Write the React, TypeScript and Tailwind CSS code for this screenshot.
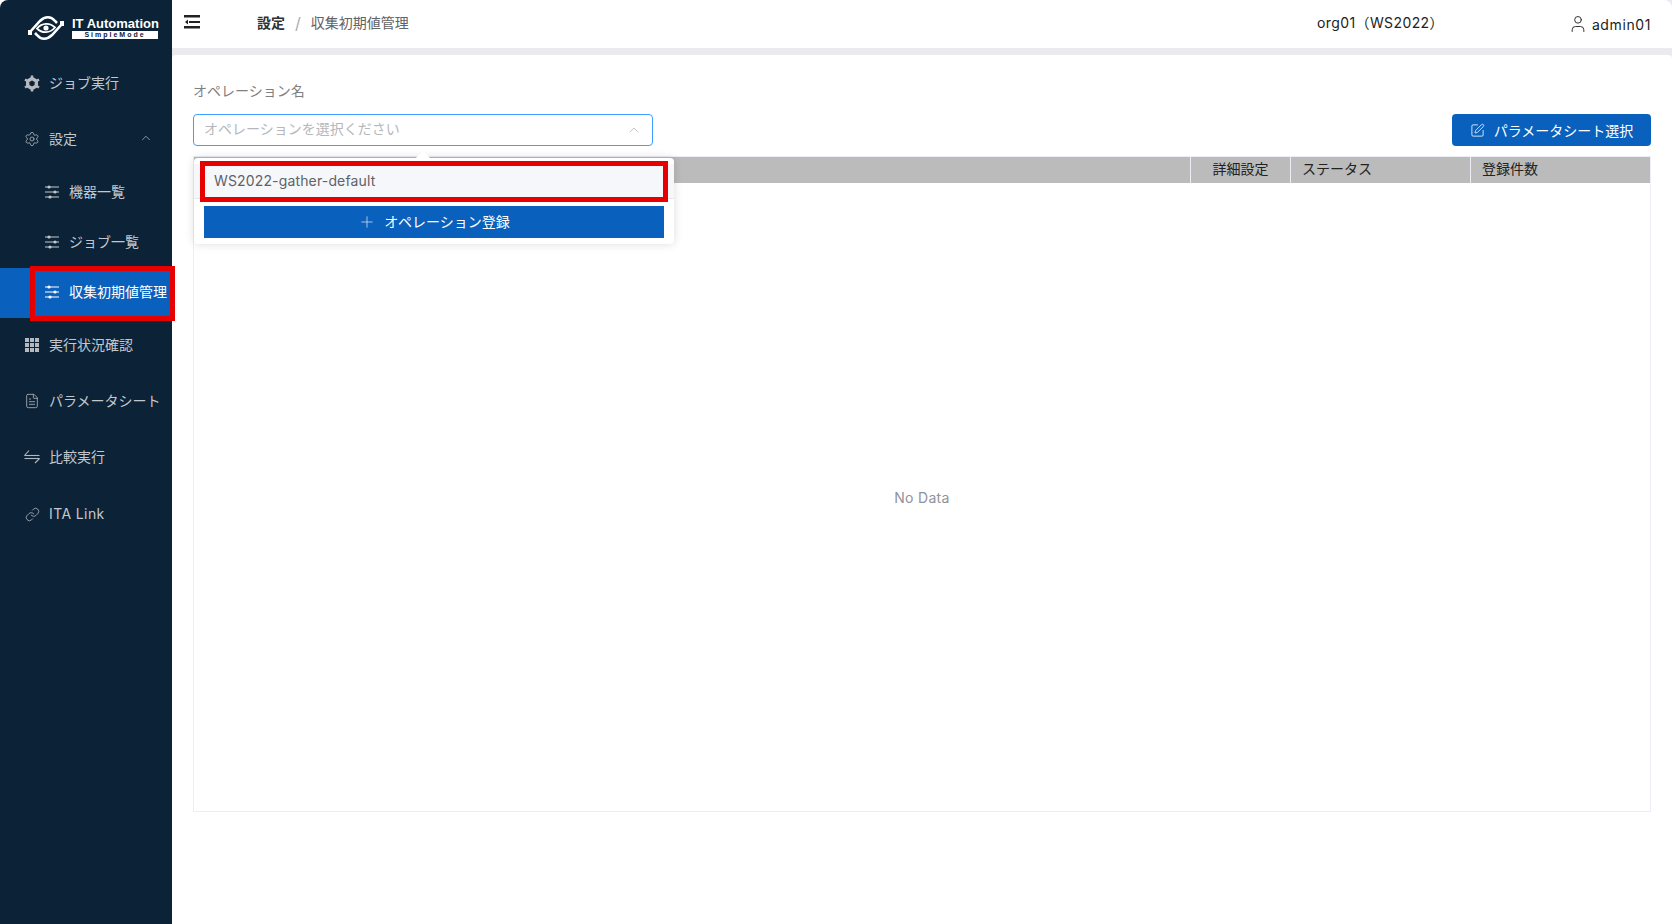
import { ChevronUp, FileText, Link, Plus, Settings, SquarePen, User } from "lucide-react";

const Sliders = () => (
  <svg width="14" height="14" viewBox="0 0 14 14" fill="currentColor" className="mt-[2px]">
    <rect x="0" y="1.5" width="14" height="1" />
    <rect x="0" y="6.500" width="14" height="1" />
    <rect x="0" y="11.500" width="14" height="1" />
    <circle cx="4" cy="2" r="1.600" />
    <circle cx="10" cy="7" r="1.600" />
    <circle cx="5" cy="12" r="1.600" />
  </svg>
);

const GearFilled = () => (
  <svg width="17" height="17" viewBox="0 0 16 16" fill="none" stroke="currentColor" className="mt-[2px]">
    <path d="M8 3 12.300 5.500v5L8 13l-4.300-2.500v-5z" strokeWidth="3.400" strokeLinejoin="round" />
    <path d="M8 0v2M8 14v2M1 4l1.700 1M13.300 11 15 12M1 12l1.700-1M13.300 5 15 4" strokeWidth="2.600" />
  </svg>
);

const GridIcon = () => (
  <svg width="14" height="14" viewBox="0 0 14 14" fill="currentColor" className="mt-[2px]">
    <rect x="0" y="0" width="4" height="4" />
    <rect x="5" y="0" width="4" height="4" />
    <rect x="10" y="0" width="4" height="4" />
    <rect x="0" y="5" width="4" height="4" />
    <rect x="5" y="5" width="4" height="4" />
    <rect x="10" y="5" width="4" height="4" />
    <rect x="0" y="10" width="4" height="4" />
    <rect x="5" y="10" width="4" height="4" />
    <rect x="10" y="10" width="4" height="4" />
  </svg>
);

const SwapIcon = () => (
  <svg width="16" height="16" viewBox="0 0 16 16" fill="none" stroke="currentColor" strokeWidth="1.100">
    <path d="M0.500 7.500 5 2.500" />
    <path d="M0.500 7.500H15.500" />
    <path d="M0.500 10.500H15.500" />
    <path d="M15.500 10.500 11 15" />
  </svg>
);

const Logo = () => (
  <div className="flex items-center gap-[7px]">
    <svg width="38" height="26" viewBox="0 0 38 26" fill="none" stroke="#fff">
      <path d="M3 17 13 6c5-5 11-5 15 0l2 2" strokeWidth="2.600" />
      <path d="M35 9 25 20c-5 5-11 5-15 0l-2-2" strokeWidth="2.600" />
      <path d="M10 13.500c5-6 13-6 18-1-5 6-13 6-18 1z" strokeWidth="1.800" />
      <circle cx="19" cy="13" r="2.600" fill="#fff" stroke="none" />
      <rect x="1" y="15" width="4" height="5" fill="#fff" stroke="none" />
      <rect x="33" y="6" width="4" height="5" fill="#fff" stroke="none" />
    </svg>
    <div className="flex w-[86px] flex-col">
      <span className="font-['Liberation_Sans',sans-serif] text-[13px] leading-[14px] font-bold whitespace-nowrap text-white">
        IT Automation
      </span>
      <span className="h-[8px] bg-white text-center font-['Liberation_Sans',sans-serif] text-[7px] leading-[8px] font-bold tracking-[2px] text-[#0c2237]">
        SimpleMode
      </span>
    </div>
  </div>
);

const TopItem = ({ icon, label, className = "" }: { icon: React.ReactNode; label: string; className?: string }) => (
  <div className={`flex items-center gap-[9px] pl-[24px] text-[14px] text-[#c3c8cf] ${className}`}>
    <span className="flex w-[16px] justify-center text-[#b4b9c0]">{icon}</span>
    <span className="whitespace-nowrap">{label}</span>
  </div>
);

const SubItem = ({ label, active = false }: { label: string; active?: boolean }) => (
  <div
    className={`relative flex h-[50px] items-center gap-[10px] pb-[4px] pl-[45px] text-[14px] ${
      active ? "bg-[#0a60bd] text-white" : "text-[#c3c8cf]"
    }`}
  >
    <Sliders />
    <span className="whitespace-nowrap">{label}</span>
    {active && (
      <div className="absolute top-[-2px] left-[30px] z-10 h-[55px] w-[145px] border-[5px] border-[#e60000]" />
    )}
  </div>
);

export default function App() {
  return (
    <div className="flex h-[924px] w-[1672px] overflow-hidden bg-white font-['Inter','Noto_Sans_CJK_JP',sans-serif]">
      {/* sidebar */}
      <aside className="flex w-[172px] shrink-0 flex-col rounded-tl-lg bg-[#0c2237]">
        <div className="flex h-[48px] items-center pt-[7px] pl-[27px]">
          <Logo />
        </div>
        <TopItem icon={<GearFilled />} label="ジョブ実行" className="mt-[8px] h-[52px]" />
        <div className="relative mt-[2px]">
          <TopItem icon={<Settings size={20} strokeWidth={1.200} className="mt-[2px]" />} label="設定" className="h-[56px]" />
          <ChevronUp size={14} strokeWidth={1.200} className="absolute top-[21px] right-[19px] text-[#c3c8cf]" />
        </div>
        <div className="mt-[2px]">
          <SubItem label="機器一覧" />
          <SubItem label="ジョブ一覧" />
          <SubItem label="収集初期値管理" active />
        </div>
        <TopItem icon={<GridIcon />} label="実行状況確認" className="mt-[-2px] h-[56px]" />
        <TopItem icon={<FileText size={20} strokeWidth={1.200} className="mt-[2px]" />} label="パラメータシート" className="h-[56px]" />
        <TopItem icon={<SwapIcon />} label="比較実行" className="h-[56px]" />
        <TopItem icon={<Link size={15} strokeWidth={1.300} className="mt-[2px]" />} label="ITA Link" className="mt-[1px] h-[56px] tracking-[0.4px]" />
      </aside>

      <div className="flex min-w-0 flex-1 flex-col bg-[#ebebef]">
        {/* header */}
        <header className="flex h-[48px] shrink-0 items-center rounded-tr-lg bg-white text-[14px]">
          <svg width="16" height="14" viewBox="0 0 16 14" className="mt-[-5px] ml-[12px] text-[#222]" fill="currentColor">
            <rect x="0" y="0" width="16" height="2.500" />
            <rect x="5" y="6" width="11" height="2" />
            <rect x="0" y="11" width="16" height="2.500" />
            <path d="M1 7l3-2.500v5z" />
          </svg>
          <div className="mt-[-3px] ml-[57px] flex items-center">
            <span className="font-semibold text-[#303133]">設定</span>
            <span className="mx-[10px] text-[16px] text-[#a8abb2]">/</span>
            <span className="text-[#606266]">収集初期値管理</span>
          </div>
          <span className="mt-[-3px] ml-auto tracking-[0.4px] text-[#222]">org01（WS2022）</span>
          <div className="mr-[21px] ml-[124px] flex items-center gap-[4px] text-[#222]">
            <User size={20} strokeWidth={1.100} />
            <span className="tracking-[0.6px]">admin01</span>
          </div>
        </header>

        {/* content */}
        <main className="mt-[7px] flex flex-1 flex-col rounded-t-[4px] bg-white pt-[27px] pr-[21px] pl-[21px]">
          <div className="text-[14px] leading-[18px] text-[#808080]">オペレーション名</div>
          <div className="mt-[14px] flex items-start justify-between">
            <div className="relative w-[460px]">
              <div className="flex h-[32px] items-center justify-between rounded-[4px] border border-[#409eff] pr-[10px] pl-[10px] text-[14px] text-[#b5b7bc]">
                <span className="mt-[-3px]">オペレーションを選択ください</span>
                <ChevronUp size={16} strokeWidth={1.200} />
              </div>

              {/* dropdown */}
              <div className="absolute top-[44px] left-[1px] z-20 w-[480px] rounded-[4px] bg-white pt-[6px] pb-[6px] shadow-[0_0_10px_rgba(0,0,0,0.14)]">
                <div className="absolute top-[-5px] left-[224px] h-[10px] w-[10px] rotate-45 bg-white" />
                <div className="relative flex h-[34px] items-center bg-[#f5f7fa] pb-[2px] pl-[20px] text-[14px] tracking-[0.15px] text-[#606266]">
                  WS2022-gather-default
                  <div className="absolute top-[-3px] right-[6px] left-[6px] h-[41px] border-[5px] border-[#e60000]" />
                </div>
                <div className="border-t border-[#e4e7ed] px-[10px] pt-[7px]">
                  <div className="flex h-[32px] items-center justify-center gap-[8px] bg-[#0a60bd] pb-[1px] text-[14px] text-white">
                    <Plus size={18} strokeWidth={1.100} className="text-[#c5d8ee]" />
                    <span>オペレーション登録</span>
                  </div>
                </div>
              </div>
            </div>
            <div className="flex h-[32px] w-[199px] items-center justify-center gap-[9px] rounded-[4px] bg-[#0a60bd] text-[14px] text-white">
              <SquarePen size={15} strokeWidth={1.300} />
              <span>パラメータシート選択</span>
            </div>
          </div>

          {/* table */}
          <div className="mt-[10px] flex h-[656px] flex-col border border-[#ebeef5]">
            <div className="flex h-[26px] shrink-0 bg-[#bbbbbb] text-[14px] text-[#222]">
              <div className="flex-1" />
              <div className="flex w-[100px] items-center justify-center border-l border-[#ebeef5] pb-[3px]">詳細設定</div>
              <div className="flex w-[180px] items-center border-l border-[#ebeef5] pb-[3px] pl-[11px]">ステータス</div>
              <div className="flex w-[180px] items-center border-l border-[#ebeef5] pb-[3px] pl-[11px]">登録件数</div>
            </div>
            <div className="flex flex-1 items-center justify-center text-[14px] tracking-[0.3px] text-[#909399]">No Data</div>
          </div>
        </main>
      </div>
    </div>
  );
}
